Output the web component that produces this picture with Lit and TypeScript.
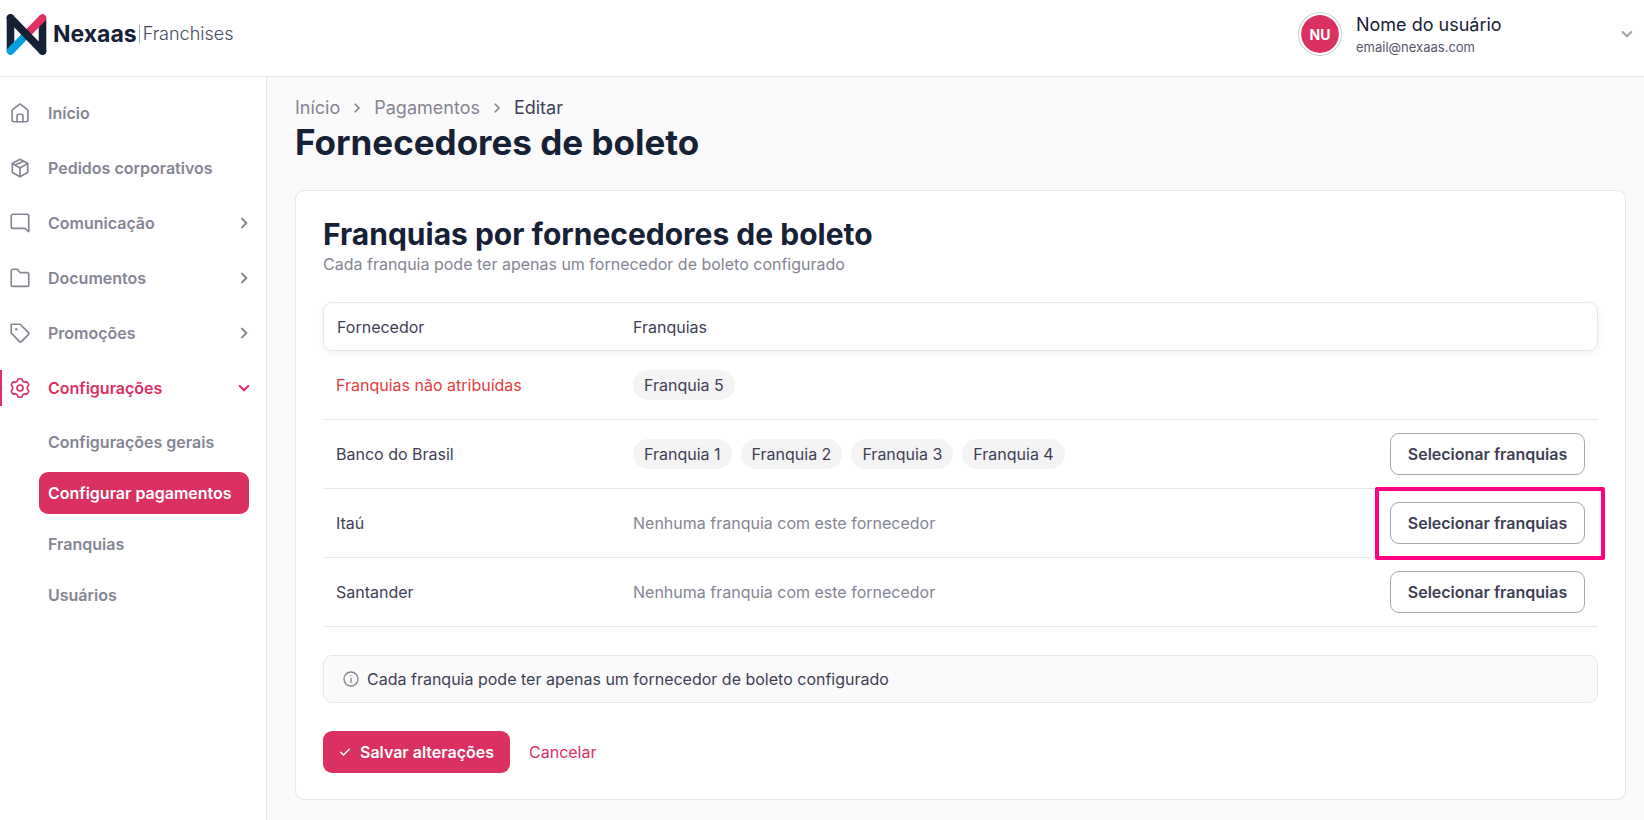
import { LitElement, html, css, svg, nothing } from "lit";
import { customElement, property, state } from "lit/decorators.js";

/** Outline of a six-lobed cog centred in a 24-unit box. */
function cogPath(): string {
  const at = (deg: number, r: number) => {
    const a = (deg * Math.PI) / 180;
    return `${(12 + r * Math.cos(a)).toFixed(2)} ${(12 + r * Math.sin(a)).toFixed(2)}`;
  };
  let d = "";
  for (let k = 0; k < 6; k++) {
    const c = -90 + 60 * k;
    d += `${k ? "L" : "M"}${at(c - 17, 9.6)}Q${at(c - 14, 11.2)} ${at(c - 7, 11.2)}L${at(c + 7, 11.2)}Q${at(c + 14, 11.2)} ${at(c + 17, 9.6)}Q${at(c + 30, 7.8)} ${at(c + 43, 9.6)}`;
  }
  return d + "Z";
}

const icons = {
  home: svg`<path d="M2.500 9.400a2 2 0 0 1 .7-1.500l7.500-6a2 2 0 0 1 2.600 0l7.500 6a2 2 0 0 1 .7 1.500V20.500a2 2 0 0 1-2 2h-15a2 2 0 0 1-2-2z"/><path d="M8.500 22.500v-7a2 2 0 0 1 2-2h3a2 2 0 0 1 2 2v7"/>`,
  box: svg`<path d="M12 1.500 21.200 6.700v10.600L12 22.500 2.800 17.300V6.700z"/><path d="M2.800 6.700 12 12l9.200-5.300M12 12v10.500M7.400 9.300v-1.500L16.400 3.900"/>`,
  chat: svg`<path d="M22.500 22.500l-4.500-4H3.500a2 2 0 0 1-2-2v-13a2 2 0 0 1 2-2h17a2 2 0 0 1 2 2z"/>`,
  folder: svg`<path d="M22.500 20a2 2 0 0 1-2 2h-17a2 2 0 0 1-2-2V3.500a2 2 0 0 1 2-2h5.500l3 4h8.500a2 2 0 0 1 2 2z"/>`,
  tag: svg`<path d="M1.500 1.500h10.500l10 9.700a2 2 0 0 1 0 2.800l-8 8a2 2 0 0 1-2.800 0L1.500 12z"/><path d="M7.500 7.500h.01" stroke-width="3"/>`,
  gear: svg`<circle cx="12" cy="12" r="3.600"/><path d=${cogPath()} />`,
  right: svg`<path d="M8.500 4.500 16 12l-7.500 7.500"/>`,
  down: svg`<path d="M4.500 8.500 12 16l7.500-7.500"/>`,
  info: svg`<circle cx="12" cy="12" r="10.500"/><path d="M12 11v6M12 7h.01"/>`,
  check: svg`<path d="M3.500 12.500 9 18 20.500 6.500"/>`,
};
type IconName = keyof typeof icons;

@customElement("nx-icon")
class NxIcon extends LitElement {
  @property() name: IconName = "home";
  @property({ type: Number }) size = 20;
  @property({ type: Number }) stroke = 2;

  static styles = css`
    :host { display: inline-flex; flex: none; }
    .icon { display: block; overflow: visible; fill: none; stroke: currentColor; stroke-linecap: round; stroke-linejoin: round; }
  `;

  render() {
    return html`<svg class="icon" width=${this.size} height=${this.size} viewBox="0 0 24 24" stroke-width=${this.stroke} aria-hidden="true">${icons[this.name]}</svg>`;
  }
}

@customElement("nx-header")
class NxHeader extends LitElement {
  static styles = css`
    :host { display: block; }
    .bar { display: flex; align-items: center; justify-content: space-between; height: 77px; box-sizing: border-box; padding: 0 8px 8px 6px; background: #fff; border-bottom: 1px solid #e7e7e8; }
    .brand { display: flex; align-items: center; color: #172136; text-decoration: none; }
    .mark { display: block; }
    .name { margin-left: 6px; font-size: 23px; font-weight: 700; line-height: 28px; }
    .product { margin-left: 2px; padding-left: 3px; border-left: 1px solid #a9abb4; font-size: 18px; line-height: 18px; font-weight: 300; color: #454a5e; }
    .user { display: flex; align-items: center; width: 337px; padding: 0; border: 0; background: none; font: inherit; text-align: left; color: #172136; }
    .avatar { display: grid; place-items: center; box-sizing: border-box; width: 42px; height: 42px; border-radius: 50%; background: #da3062; background-clip: padding-box; color: #fff; font-size: 14px; font-weight: 700; border: 2px solid #fff; box-shadow: 0 0 0 1px #cfcfd6; }
    .who { flex: 1; display: grid; margin-left: 15px; padding-top: 1px; }
    .full { font-size: 18px; line-height: 24px; }
    .mail { font-size: 13px; line-height: 20px; color: #56596b; }
    .caret { color: #a4a4b0; margin-right: 2px; }
  `;

  render() {
    return html`<header class="bar">
      <a class="brand" href="#" aria-label="Nexaas Franchises">
        <svg class="mark" width="41" height="43" viewBox="0 0 41 43" fill="none" stroke-width="7.600" stroke-linecap="round" aria-hidden="true">
          <path d="M4.500 5v32M36.500 38V7" stroke="#172136"/>
          <path d="M36.500 5 20 22" stroke="#de3163"/>
          <path d="M20 22 4.500 38" stroke="#079ee0"/>
          <path d="M4.500 5 36.500 38" stroke="#172136"/>
        </svg>
        <span class="name">Nexaas</span><span class="product">Franchises</span>
      </a>
      <button class="user" type="button" aria-haspopup="menu">
        <span class="avatar">NU</span>
        <span class="who"><span class="full">Nome do usuário</span><span class="mail">email@nexaas.com</span></span>
        <nx-icon class="caret" name="down" size="14" stroke="3.500"></nx-icon>
      </button>
    </header>`;
  }
}

interface NavEntry { label: string; icon: IconName; children?: string[] }

const navigation: NavEntry[] = [
  { label: "Início", icon: "home" },
  { label: "Pedidos corporativos", icon: "box" },
  { label: "Comunicação", icon: "chat", children: [] },
  { label: "Documentos", icon: "folder", children: [] },
  { label: "Promoções", icon: "tag", children: [] },
  { label: "Configurações", icon: "gear", children: ["Configurações gerais", "Configurar pagamentos", "Franquias", "Usuários"] },
];

@customElement("nx-sidebar")
class NxSidebar extends LitElement {
  @state() private open = "Configurações";

  static styles = css`
    :host { display: block; background: #fff; border-right: 1px solid #e7e7e8; }
    .menu, .sub { list-style: none; margin: 0; padding: 0; }
    .menu { padding-top: 8px; }
    .entry { display: flex; align-items: center; width: 100%; height: 55px; box-sizing: border-box; padding: 0 15px 0 10px; border: 0; background: none; font: inherit; font-size: 16px; font-weight: 600; color: #858593; text-align: left; text-decoration: none; }
    .text { flex: 1; margin-left: 18px; }
    .open { color: #da3062; background: linear-gradient(#da3062, #da3062) left center / 2px 36px no-repeat; }
    .sub { display: grid; gap: 9px; padding: 6px 17px 0 39px; }
    .leaf { display: flex; align-items: center; height: 42px; padding: 0 9px; border-radius: 9px; font-size: 16px; font-weight: 600; color: #858593; text-decoration: none; white-space: nowrap; }
    .current { background: #da3062; color: #fff; }
  `;

  private toggle(label: string) {
    this.open = this.open === label ? "" : label;
  }

  private entry(item: NavEntry) {
    const label = html`<nx-icon name=${item.icon} size="20" stroke="2"></nx-icon><span class="text">${item.label}</span>`;
    if (!item.children) return html`<li><a class="entry" href="#">${label}</a></li>`;
    const open = this.open === item.label;
    return html`<li>
      <button type="button" class="entry ${open ? "open" : ""}" aria-expanded=${open} @click=${() => this.toggle(item.label)}>
        ${label}<nx-icon name=${open ? "down" : "right"} size="14" stroke="3.500"></nx-icon>
      </button>
      ${open ? html`<ul class="sub">${item.children.map((c) => html`<li><a class="leaf ${c === "Configurar pagamentos" ? "current" : ""}" href="#">${c}</a></li>`)}</ul>` : nothing}
    </li>`;
  }

  render() {
    return html`<nav><ul class="menu">${navigation.map((n) => this.entry(n))}</ul></nav>`;
  }
}

interface Supplier { name: string; franchises: string[]; unassigned?: boolean; marked?: boolean }

const suppliers: Supplier[] = [
  { name: "Franquias não atribuídas", franchises: ["Franquia 5"], unassigned: true },
  { name: "Banco do Brasil", franchises: ["Franquia 1", "Franquia 2", "Franquia 3", "Franquia 4"] },
  { name: "Itaú", franchises: [], marked: true },
  { name: "Santander", franchises: [] },
];

@customElement("nx-suppliers")
class NxSuppliers extends LitElement {
  static styles = css`
    :host { display: block; }
    .table { width: 100%; border-collapse: separate; border-spacing: 0; table-layout: fixed; font-size: 16px; line-height: 24px; color: #3e3f54; }
    .c1 { width: 297px; }
    .c3 { width: 240px; }
    .head { border-radius: 9px; box-shadow: 0 2px 6px rgba(0, 0, 0, 0.06); }
    .th { height: 47px; padding: 0 13px; font-weight: 400; text-align: left; border: solid #e7e7e8; border-width: 1px 0; }
    .th:first-child { border-left-width: 1px; border-radius: 9px 0 0 9px; }
    .th:last-child { border-right-width: 1px; border-radius: 0 9px 9px 0; }
    .td { height: 68px; padding: 0 13px; border-bottom: 1px solid #e7e7e8; text-align: left; font-weight: 400; }
    .unassigned { color: #e23d3d; }
    .tags { display: flex; gap: 9px; list-style: none; margin: 0; padding: 0; }
    .tag { padding: 3px 11px; border-radius: 15px; background: #f4f4f4; white-space: nowrap; }
    .none { color: #858593; }
    .action { text-align: right; }
    .slot { position: relative; display: inline-block; vertical-align: middle; }
    .marked::after { content: ""; position: absolute; inset: -15px -20px -16px -15px; border: 4px solid #ff0083; border-radius: 2px; pointer-events: none; }
    .pick { display: block; width: 195px; height: 42px; padding: 0; border: 1px solid #a7a7b3; border-radius: 9px; background: #fff; color: #3e3f54; font: inherit; font-weight: 600; }
  `;

  private row(s: Supplier) {
    return html`<tr>
      <th scope="row" class="td ${s.unassigned ? "unassigned" : ""}">${s.name}</th>
      <td class="td">${s.franchises.length
        ? html`<ul class="tags">${s.franchises.map((f) => html`<li class="tag">${f}</li>`)}</ul>`
        : html`<span class="none">Nenhuma franquia com este fornecedor</span>`}</td>
      <td class="td action">${s.unassigned
        ? nothing
        : html`<div class="slot ${s.marked ? "marked" : ""}"><button type="button" class="pick">Selecionar franquias</button></div>`}</td>
    </tr>`;
  }

  render() {
    return html`<table class="table">
      <colgroup><col class="c1" /><col /><col class="c3" /></colgroup>
      <thead><tr class="head"><th class="th" scope="col">Fornecedor</th><th class="th" scope="col">Franquias</th><td class="th"></td></tr></thead>
      <tbody>${suppliers.map((s) => this.row(s))}</tbody>
    </table>`;
  }
}

@customElement("app-root")
class AppRoot extends LitElement {
  static styles = css`
    :host { display: grid; grid-template: auto 1fr / 267px minmax(0, 1fr); min-height: 100vh; background: #fafafa; font-family: Inter, "Liberation Sans", sans-serif; color: #3e3f54; }
    .top { grid-column: 1 / -1; }
    .main { padding: 17px 18px 20px 28px; }
    .crumbs { display: flex; align-items: center; gap: 11px; list-style: none; margin: 0; padding: 0; font-size: 18px; line-height: 27px; color: #858593; }
    .crumb { display: flex; align-items: center; gap: 11px; }
    .link { color: inherit; text-decoration: none; }
    .here { color: #3e3f54; }
    .title { margin: 0 0 27px; font-size: 35px; line-height: 42px; font-weight: 700; color: #172136; }
    .card { padding: 26px 27px; background: #fff; border: 1px solid #e7e7e8; border-radius: 9px; }
    .heading { margin: 0; font-size: 30px; line-height: 35px; font-weight: 700; color: #172136; }
    .hint { margin: 0 0 26px; font-size: 16px; line-height: 24px; color: #858593; }
    .notice { display: flex; align-items: center; gap: 8px; height: 46px; margin: 28px 0; padding: 0 19px; border: 1px solid #e7e7e8; border-radius: 9px; background: #fafafa; font-size: 16px; }
    .note-icon { color: #858593; }
    .actions { display: flex; align-items: center; gap: 19px; }
    .save { display: flex; align-items: center; gap: 9px; height: 42px; padding: 0 16px; border: 0; border-radius: 9px; background: #da3062; color: #fff; font: inherit; font-size: 16px; font-weight: 600; }
    .cancel { color: #da3062; font-size: 16px; text-decoration: none; }
  `;

  render() {
    return html`
      <nx-header class="top"></nx-header>
      <nx-sidebar></nx-sidebar>
      <main class="main">
        <nav aria-label="Trilha">
          <ol class="crumbs">
            <li class="crumb"><a class="link" href="#">Início</a><nx-icon name="right" size="12" stroke="3.500"></nx-icon></li>
            <li class="crumb"><a class="link" href="#">Pagamentos</a><nx-icon name="right" size="12" stroke="3.500"></nx-icon></li>
            <li class="here" aria-current="page">Editar</li>
          </ol>
        </nav>
        <h1 class="title">Fornecedores de boleto</h1>
        <section class="card">
          <h2 class="heading">Franquias por fornecedores de boleto</h2>
          <p class="hint">Cada franquia pode ter apenas um fornecedor de boleto configurado</p>
          <nx-suppliers></nx-suppliers>
          <div class="notice"><nx-icon class="note-icon" name="info" size="16" stroke="2"></nx-icon><span>Cada franquia pode ter apenas um fornecedor de boleto configurado</span></div>
          <div class="actions">
            <button type="button" class="save"><nx-icon name="check" size="12" stroke="3"></nx-icon><span>Salvar alterações</span></button>
            <a class="cancel" href="#">Cancelar</a>
          </div>
        </section>
      </main>
    `;
  }
}
